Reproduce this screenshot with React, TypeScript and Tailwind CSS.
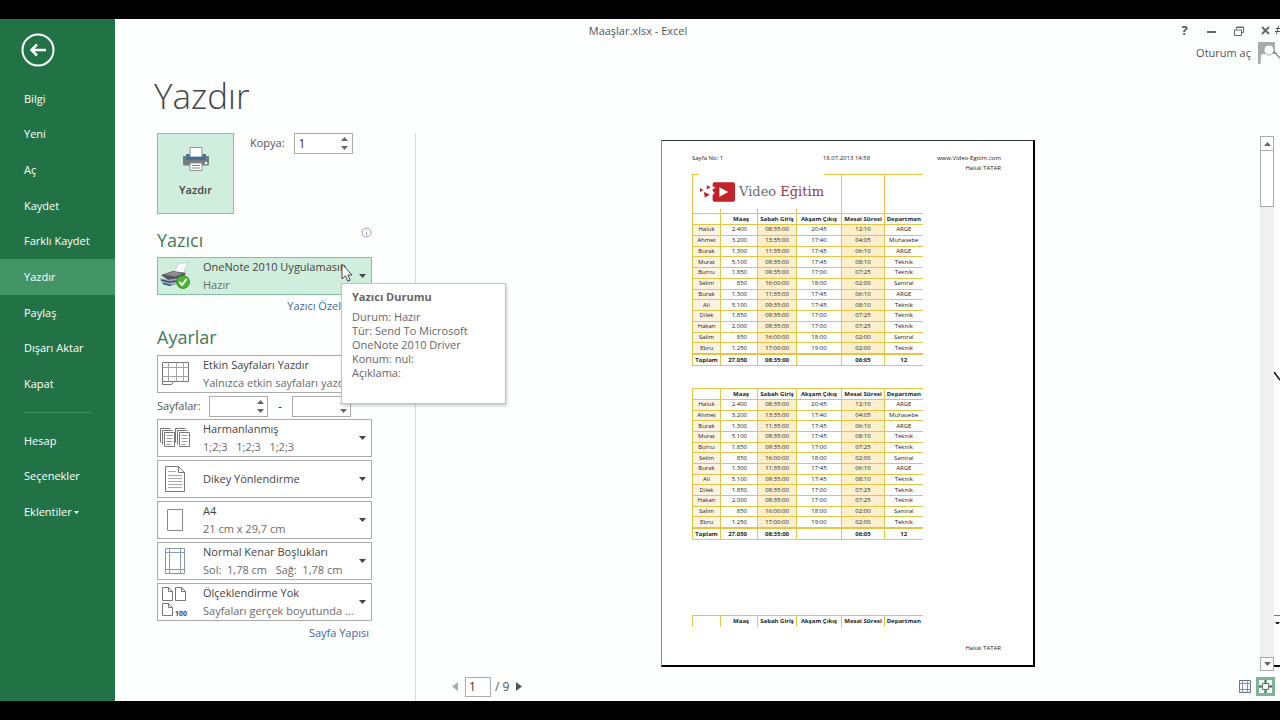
import { useState } from "react";
import type { ReactNode } from "react";

const mainMenu = ["Bilgi", "Yeni", "Aç", "Kaydet", "Farklı Kaydet", "Yazdır", "Paylaş", "Dışarı Aktar", "Kapat"];

const headings = ["", "Maaş", "Sabah Giriş", "Akşam Çıkış", "Mesai Süresi", "Departman"];

const employees = [
  ["Haluk", "2.400", "08:35:00", "20:45", "12:10", "ARGE"],
  ["Ahmet", "3.200", "13:35:00", "17:40", "04:05", "Muhasebe"],
  ["Burak", "1.300", "11:35:00", "17:45", "06:10", "ARGE"],
  ["Murat", "5.100", "09:35:00", "17:45", "08:10", "Teknik"],
  ["Burcu", "1.850", "09:35:00", "17:00", "07:25", "Teknik"],
  ["Selim", "850", "16:00:00", "18:00", "02:00", "Santral"],
  ["Burak", "1.300", "11:35:00", "17:45", "06:10", "ARGE"],
  ["Ali", "5.100", "09:35:00", "17:45", "08:10", "Teknik"],
  ["Dilek", "1.850", "09:35:00", "17:00", "07:25", "Teknik"],
  ["Hakan", "2.000", "09:35:00", "17:00", "07:25", "Teknik"],
  ["Salim", "850", "16:00:00", "18:00", "02:00", "Santral"],
  ["Ebru", "1.250", "17:00:00", "19:00", "02:00", "Teknik"],
];

const totals = ["Toplam", "27.050", "08:35:00", "", "06:05", "12"];

/* ---------- Icons ---------- */

const Caret = ({ className = "" }: { className?: string }) => (
  <svg className={className} width="7" height="4" viewBox="0 0 7 4" fill="currentColor">
    <path d="M0 0h7L3.500 4z" />
  </svg>
);

const CaretUp = ({ className = "" }: { className?: string }) => (
  <svg className={className} width="7" height="4" viewBox="0 0 7 4" fill="currentColor">
    <path d="M0 4h7L3.500 0z" />
  </svg>
);

const PrintIcon = () => (
  <svg width="28" height="26" viewBox="0 0 28 26">
    <path d="M1 10h26v8a1.500 1.500 0 0 1-1.500 1.500h-23A1.500 1.500 0 0 1 1 18z" fill="#737d80" />
    <path d="M4 8h20v6H4z" fill="#4a7399" />
    <path d="M8 1.500h12V11H8z" fill="#fff" stroke="#8a9396" />
    <path d="M6 11h16v2H6z" fill="#3f6c96" />
    <path d="M8 17h12v7.500H8z" fill="#fff" stroke="#8a9396" />
    <path d="M10 19.500h8M10 22h8" stroke="#7d868a" />
    <circle cx="24" cy="17" r="1.300" fill="#fff" />
  </svg>
);

const DeviceIcon = () => (
  <svg width="32" height="30" viewBox="0 0 32 30">
    <path d="M15 12l4-9 10-2-4 11z" fill="#f8f8fa" stroke="#c3c6cc" strokeWidth="0.800" />
    <path d="M2 14l12-4 13 2-4 6-14 1z" fill="#55555d" />
    <path d="M5 13.500l10-3 9 2-8 3z" fill="#8d8c94" />
    <path d="M1 17l8 2 12-2v5l-9 3-9-3z" fill="#a3abbb" />
    <path d="M2 19l8 2 8-1M4 22.500l8 2" stroke="#35527e" strokeWidth="1.300" fill="none" />
    <circle cx="24" cy="21" r="6.500" fill="#4ab534" stroke="#2c8c1c" strokeWidth="0.800" />
    <path d="M20.500 21l2.700 3 4.300-6" stroke="#fff" strokeWidth="2" fill="none" />
  </svg>
);

const SheetsIcon = () => (
  <svg width="28" height="26" viewBox="0 0 28 26" fill="none" stroke="#777">
    <path d="M1.500 1.500h26v19h-15l-2 3h-9zM1.500 20.500h11" />
    <path d="M1.500 6.500h26M1.500 15.500h26M7.500 1.500v19M15.500 1.500v19M22.500 1.500v19" stroke="#a5a5a5" />
  </svg>
);

const CollatedIcon = () => (
  <svg width="32" height="22" viewBox="0 0 32 22" fill="#fff" stroke="#777">
    {[0, 15].map((x) => (
      <g key={x}>
        <path d={`M${x + 1.5} 15.500v-14h10M${x + 3.5} 17.500v-14h10`} fill="none" />
        <path d={`M${x + 5.5} 5.500h10v14h-10z`} />
        <path d={`M${x + 7.5} 8.500h6M${x + 7.5} 11.500h6M${x + 7.5} 14.500h6M${x + 7.5} 17.500h4`} stroke="#999" />
      </g>
    ))}
  </svg>
);

const PortraitIcon = () => (
  <svg width="22" height="28" viewBox="0 0 22 28" fill="none" stroke="#777">
    <path d="M1.500 1.500h13l6 6v19h-19zM14.500 1.500v6h6" />
    <path d="M4 6.500h8M4 10.500h14M4 13.500h14M4 16.500h14M4 19.500h14M4 22.500h14" stroke="#a8a8a8" />
  </svg>
);

const PaperIcon = () => (
  <svg width="18" height="24" viewBox="0 0 18 24" fill="none" stroke="#888">
    <path d="M1.500 1.500h15v21h-15z" />
  </svg>
);

const MarginsIcon = () => (
  <svg width="22" height="28" viewBox="0 0 22 28" fill="none">
    <path d="M1.500 1.500h19v25h-19z" stroke="#8b949c" />
    <path d="M5.500 1v26M16.500 1v26M1 5.500h20M1 22.500h20" stroke="#7d9dba" />
  </svg>
);

const ScalingIcon = () => (
  <svg width="28" height="32" viewBox="0 0 28 32" fill="none" stroke="#777">
    <path d="M1.500 1.500h6l4 4v9h-10zM7.500 1.500v4h4" />
    <path d="M14.500 1.500h6l4 4v9h-10zM20.500 1.500v4h4" />
    <path d="M1.500 17.500h6l4 4v8h-10zM7.500 17.500v4h4" />
    <text x="14" y="30" fontSize="7" fontWeight="700" fill="#444" stroke="none">100</text>
  </svg>
);

const InfoIcon = () => (
  <svg width="11" height="11" viewBox="0 0 11 11" fill="none" stroke="#a29cc0">
    <circle cx="5.500" cy="5.500" r="4.500" />
    <path d="M5.500 5v3.500M5.500 2.500v1.200" />
  </svg>
);

const CursorIcon = () => (
  <svg className="absolute left-[184px] top-[6px] z-20" width="13" height="20" viewBox="0 0 13 20">
    <path d="M1 1v15l3.500-3.200 2.300 5.400 2.400-1-2.300-5.200H11z" fill="#fff" stroke="#444" />
  </svg>
);

const LogoMark = () => (
  <svg width="38" height="22" viewBox="0 0 38 22">
    <path d="M1 7l3.500 2L1 11zM8 4l4 2-4 2.500zM5 11l6 2.500L6 17z" fill="#b8242b" />
    <path d="M16 1h19a2 2 0 0 1 2 2v16a2 2 0 0 1-2 2H16a2 2 0 0 1-2-2v-5l2-2-2-2V8l3-1-3-2V3a2 2 0 0 1 2-2z" fill="#c4222b" />
    <path d="M21 6l9 5-9 5z" fill="#fff" />
  </svg>
);

/* ---------- Print settings ---------- */

const Spinner = ({ id, label, initial = "" }: { id: string; label: string; initial?: string }) => {
  const [value, setValue] = useState(initial);
  const step = (by: number) => setValue(String(Math.max(1, (Number(value) || 0) + by)));

  return (
    <div className="flex h-[21px] w-[59px] border border-[#ababab] bg-white">
      <input
        id={id}
        aria-label={label}
        value={value}
        onChange={(e) => setValue(e.target.value)}
        className="w-0 flex-1 pl-1 text-xs text-[#333] outline-none"
      />
      <div className="flex w-[14px] flex-col items-center justify-between py-[3px] text-[#666]">
        <button aria-label={`${label} artır`} onClick={() => step(1)}>
          <CaretUp className="block" />
        </button>
        <button aria-label={`${label} azalt`} onClick={() => step(-1)}>
          <Caret className="block" />
        </button>
      </div>
    </div>
  );
};

type OptionProps = { icon: ReactNode; title: string; detail?: string; active?: boolean };

const Option = ({ icon, title, detail, active }: OptionProps) => (
  <button
    aria-haspopup="listbox"
    className={`flex h-[38px] w-full items-center border pr-[5px] text-left ${
      active ? "border-[#86bfa0] bg-[#d0eedd]" : "border-[#ababab] bg-white"
    }`}
  >
    <span className="flex w-[34px] shrink-0 justify-center">{icon}</span>
    <span className="ml-[11px] min-w-0 flex-1 whitespace-pre leading-[18px]">
      <span className="block overflow-hidden text-[#444]">{title}</span>
      {detail && <span className="block overflow-hidden text-[#6a6a6a]">{detail}</span>}
    </span>
    <Caret className="shrink-0 text-[#444]" />
  </button>
);

const PrinterStatus = () => (
  <div
    role="tooltip"
    className="absolute left-[184px] top-[26px] z-10 w-[165px] border border-[#c3c3c3] bg-white px-[10px] pb-[23px] pt-[6px] leading-[14px] text-[#666] shadow-[1px_2px_3px_rgba(0,0,0,0.2)]"
  >
    <p className="mb-[6px] font-bold text-[#666]">Yazıcı Durumu</p>
    <p>Durum: Hazır</p>
    <p>Tür: Send To Microsoft</p>
    <p>OneNote 2010 Driver</p>
    <p>Konum: nul:</p>
    <p>Açıklama:</p>
  </div>
);

const Settings = () => (
  <section className="w-[301px] shrink-0 border-r border-[#dcdcdc] pl-[42px] pr-[43px]">
    <div className="flex">
      <button className="flex h-[81px] w-[77px] flex-col items-center border border-[#86bfa0] bg-[#d0eedd] pt-3 font-semibold text-[#444]">
        <PrintIcon />
        <span className="mt-[10px]">Yazdır</span>
      </button>
      <div className="ml-4 flex h-[21px] items-center gap-[9px]">
        <label htmlFor="copies" className="text-[#555]">Kopya:</label>
        <Spinner id="copies" label="Kopya" initial="1" />
      </div>
    </div>

    <div className="flex h-[43px] items-start justify-between">
      <h2 className="pt-3 text-lg text-[#3f7a5a]">Yazıcı</h2>
      <button aria-label="Yazıcı bilgisi" className="mt-[13px]"><InfoIcon /></button>
    </div>
    <div className="relative">
      <Option active icon={<DeviceIcon />} title="OneNote 2010 Uygulamasın" detail="Hazır" />
      <PrinterStatus />
      <CursorIcon />
    </div>
    <div className="flex h-[23px] w-[184px] items-center justify-end overflow-hidden whitespace-nowrap">
      <a href="#printer" aria-label="Yazıcı Özellikleri" className="text-[#44699a]">Yazıcı Özel</a>
    </div>

    <h2 className="flex h-[37px] items-center text-lg text-[#3f7a5a]">Ayarlar</h2>
    <Option icon={<SheetsIcon />} title="Etkin Sayfaları Yazdır" detail="Yalnızca etkin sayfaları yazdır" />
    <div className="flex h-[26px] items-center">
      <label htmlFor="from" className="w-[52px] text-[#555]">Sayfalar:</label>
      <Spinner id="from" label="İlk sayfa" />
      <span className="w-6 text-center">-</span>
      <Spinner id="to" label="Son sayfa" />
    </div>
    <div className="flex flex-col gap-[3px]">
      <Option icon={<CollatedIcon />} title="Harmanlanmış" detail="1;2;3   1;2;3   1;2;3" />
      <Option icon={<PortraitIcon />} title="Dikey Yönlendirme" />
      <Option icon={<PaperIcon />} title="A4" detail="21 cm x 29,7 cm" />
      <Option icon={<MarginsIcon />} title="Normal Kenar Boşlukları" detail="Sol:  1,78 cm   Sağ:  1,78 cm" />
      <Option icon={<ScalingIcon />} title="Ölçeklendirme Yok" detail="Sayfaları gerçek boyutunda ..." />
    </div>
    <div className="flex h-6 items-center justify-end pr-[3px]">
      <a href="#page-setup" className="text-[#44699a]">Sayfa Yapısı</a>
    </div>
  </section>
);

/* ---------- Preview ---------- */

const align = (i: number) => (i === 1 ? "pr-[10px] text-right" : "text-center");
const edge = (i: number) => (i === 5 ? "" : "border-r");
const shade = (i: number) => (i === 0 ? "bg-[#fdf3e3]" : i === 2 || i === 4 ? "bg-[#fdefcb]" : "");

const Columns = () => (
  <colgroup>
    <col className="w-[28px]" />
    <col className="w-[37px]" />
    <col className="w-[39px]" />
    <col className="w-[45px]" />
    <col className="w-[43px]" />
    <col className="w-[38px]" />
  </colgroup>
);

const HeadingRow = () => (
  <tr className="h-[11px] border-t border-[#e6c445]">
    {headings.map((text, i) => (
      <th key={i} className={`border-[#e6c445] p-0 font-bold ${edge(i)} ${i === 1 ? "pr-2 text-right" : ""}`}>
        {text}
      </th>
    ))}
  </tr>
);

const SalaryTable = ({ logo, body = true, className }: { logo?: boolean; body?: boolean; className: string }) => (
  <table className={`w-[230px] table-fixed border-collapse whitespace-nowrap border-l border-[#e6c445] leading-[9px] ${className}`}>
    <Columns />
    <thead>
      {logo && (
        <tr className="h-[39px] border-t border-[#e6c445]">
          {headings.map((_, i) => (
            <td key={i} className={`border-[#e6c445] p-0 ${edge(i)}`} />
          ))}
        </tr>
      )}
      <HeadingRow />
    </thead>
    {body && (
      <tbody>
        {employees.map((row, r) => (
          <tr key={r} className="border-t border-[#e6c445]">
            {row.map((text, i) => (
              <td key={i} className={`border-[#e6c445] p-0 ${edge(i)} ${align(i)} ${shade(i)}`}>{text}</td>
            ))}
          </tr>
        ))}
        <tr className="border-b border-t-2 border-[#e6c445] font-bold">
          {totals.map((text, i) => (
            <td key={i} className={`border-[#e6c445] p-0 ${edge(i)} ${align(i)}`}>{text}</td>
          ))}
        </tr>
      </tbody>
    )}
  </table>
);

const Sheet = () => (
  <article className="h-[527px] w-[374px] border-b-2 border-l border-r-2 border-t border-black border-l-[#888] border-t-[#333] bg-white pl-[30px] pr-8 pt-3 text-[6px] leading-[10px] text-[#222]">
    <header className="grid h-[21px] grid-cols-3">
      <span>Sayfa No: 1</span>
      <span className="text-center">18.07.2013 14:58</span>
      <span className="text-right">www.Video-Egitim.com<br />Haluk TATAR</span>
    </header>
    <div className="relative">
      <SalaryTable logo className="h-[192px]" />
      {/* the logo picture floats over the empty first row */}
      <div className="absolute left-[7px] top-0 flex h-[35px] w-[125px] items-center gap-[3px] whitespace-nowrap bg-white font-['DejaVu_Serif',serif] text-[13px] text-[#6a6a6a]">
        <LogoMark />
        <span>Video <span className="text-[#963a4a]">Eğitim</span></span>
      </div>
    </div>
    <SalaryTable className="mt-[22px] h-[152px]" />
    <SalaryTable body={false} className="mt-[75px]" />
    <footer className="mt-4 text-right">Haluk TATAR</footer>
  </article>
);

const ScrollBar = () => (
  <div className="flex w-[14px] flex-col bg-[#f0f0f0] text-[#666]">
    <button aria-label="Yukarı kaydır" className="flex h-[15px] items-center justify-center border border-[#ababab] bg-white">
      <CaretUp />
    </button>
    <div className="h-14 border border-t-0 border-[#ababab] bg-white" />
    <button aria-label="Aşağı kaydır" className="mt-auto flex h-[14px] items-center justify-center border border-[#ababab] bg-white">
      <Caret />
    </button>
  </div>
);

const WindowEdge = () => (
  <svg className="w-[6px] shrink-0" width="6" height="535" viewBox="0 0 6 535" fill="none">
    <path d="M0 236l6 8" stroke="#111" strokeWidth="1.500" />
    <path d="M0 479.500h6M1 486.500h5" stroke="#77779a" />
    <path d="M2 487h3" stroke="#222" strokeWidth="2" />
    <path d="M0 530h6" stroke="#111" strokeWidth="2" />
  </svg>
);

const Preview = () => {
  const [page, setPage] = useState(1);

  return (
    <section className="flex min-w-0 flex-1 flex-col pt-[3px]">
      <div className="flex flex-1">
        <div className="flex flex-1 items-center justify-center pl-5">
          <Sheet />
        </div>
        <ScrollBar />
        <WindowEdge />
      </div>
      <div className="flex h-[30px] items-center pl-9 pr-[5px] pt-px text-xs text-[#555]">
        <button aria-label="Önceki sayfa" onClick={() => setPage(Math.max(1, page - 1))}>
          <svg width="6" height="9" viewBox="0 0 6 9"><path d="M6 0v9L0 4.500z" fill="#aaa" /></svg>
        </button>
        <input
          aria-label="Sayfa"
          value={page}
          onChange={(e) => setPage(Number(e.target.value) || 1)}
          className="ml-[7px] h-5 w-[26px] border border-[#ababab] bg-white pl-[3px] text-[#333] outline-none"
        />
        <span className="ml-1 mr-[7px]">/ 9</span>
        <button aria-label="Sonraki sayfa" onClick={() => setPage(Math.min(9, page + 1))}>
          <svg width="6" height="9" viewBox="0 0 6 9"><path d="M0 0v9l6-4.500z" fill="#555" /></svg>
        </button>
        <button aria-label="Kenar boşluklarını göster" className="ml-auto mr-1">
          <svg width="13" height="15" viewBox="0 0 13 15" fill="none" stroke="#5f6f8c">
            <path d="M.5 1.500h11v12H.5z" />
            <path d="M3.500 1v13M8.500 1v13M0 4.500h12M0 10.500h12" stroke="#8591a8" />
          </svg>
        </button>
        <button aria-label="Sayfaya yakınlaştır">
          <svg width="19" height="19" viewBox="0 0 19 19" fill="none">
            <path d="M0 0h19v19H0z" fill="#7fb498" />
            <path d="M3 3h5v3H6v2H3zM11 3h5v5h-3V6h-2zM3 11h3v2h2v3H3zM13 11h3v5h-5v-3h2z" fill="#f6fbf8" />
            <path d="M6.500 6.500h6v6h-6z" fill="#fff" stroke="#5d7466" />
            <path d="M9.500 3v2.500M9.500 13.500V16M3 9.500h2.500M13.500 9.500H16" stroke="#3f6b54" />
          </svg>
        </button>
      </div>
    </section>
  );
};

/* ---------- Window ---------- */

const itemClass = "flex items-center pl-6 text-left text-white";

const Sidebar = () => {
  const [selected, setSelected] = useState("Yazdır");

  return (
    <nav className="w-[115px] shrink-0 whitespace-nowrap bg-[#217346] font-medium">
      <div className="h-[62px] pl-[21px] pt-[14px]">
        <button aria-label="Geri">
          <svg width="34" height="34" viewBox="0 0 34 34" fill="none" stroke="#fff" strokeWidth="2">
            <circle cx="17" cy="17" r="15.500" />
            <path d="M25 17H10.500M16 11.500L10.500 17l5.500 5.500" strokeWidth="2.500" />
          </svg>
        </button>
      </div>
      <div className="grid h-[321px] auto-rows-fr">
        {mainMenu.map((name) => (
          <button
            key={name}
            onClick={() => setSelected(name)}
            className={`${itemClass} ${selected === name ? "bg-[#439467]" : ""}`}
          >
            {name}
          </button>
        ))}
      </div>
      <hr className="mx-6 my-[10px] border-[#439467]" />
      <div className="grid h-[107px] auto-rows-fr">
        <button className={itemClass}>Hesap</button>
        <button className={itemClass}>Seçenekler</button>
        <button className={itemClass}>
          Eklentiler
          <svg className="ml-[2px]" width="5" height="3" viewBox="0 0 5 3"><path d="M0 0h5L2.500 3z" fill="#fff" /></svg>
        </button>
      </div>
    </nav>
  );
};

const controlClass = "flex w-[27px] items-center justify-center";

const TitleBar = () => (
  <header className="relative overflow-hidden text-[#555]">
    <div className="flex h-[23px]">
      <h1 className="flex-1 text-center leading-[23px]">Maaşlar.xlsx - Excel</h1>
      <div className="flex w-[119px] shrink-0 pl-[10px]">
        <button aria-label="Yardım" className={`${controlClass} text-[13px] font-bold`}>?</button>
        <button aria-label="Simge durumuna küçült" className={controlClass}>
          <svg width="9" height="9" viewBox="0 0 9 9"><path d="M0 6h9" stroke="#666" strokeWidth="2" /></svg>
        </button>
        <button aria-label="Önceki boyut" className={controlClass}>
          <svg width="10" height="10" viewBox="0 0 10 10" fill="none" stroke="#666">
            <path d="M2.500 3V1h7v5.500H8M2 1.500h8M.5 4v5.500h7V4M0 4h8" />
          </svg>
        </button>
        <button aria-label="Kapat" className={controlClass}>
          <svg width="9" height="9" viewBox="0 0 9 9"><path d="M1 1l7 7M8 1L1 8" stroke="#666" strokeWidth="1.800" /></svg>
        </button>
      </div>
    </div>
    <div className="flex h-[22px] items-center justify-end">
      <a href="#account">Oturum aç</a>
      <svg className="ml-[7px]" width="22" height="22" viewBox="0 0 22 22">
        <path d="M0 0h17v12H0z" fill="#ababab" />
        <path d="M0 10h5l-2 4-.5 8H0z" fill="#ababab" />
        <path d="M3 13q8 4 14-1v10H3z" fill="#fdfefe" />
        <circle cx="11" cy="8" r="5" fill="#fff" stroke="#aaa" />
        <path d="M15 10l4 2M18 12l4 4" stroke="#888" strokeWidth="1.500" />
      </svg>
    </div>
    <svg className="absolute right-0 top-[6px]" width="5" height="10" viewBox="0 0 5 10" fill="none" stroke="#555">
      <path d="M3.500 1L1.500 9M1 3.500h4M0 6.500h5" />
    </svg>
  </header>
);

const App = () => (
  <div className="flex min-h-screen bg-black py-[19px] font-['Open_Sans','Noto_Sans',sans-serif] text-[11px]">
    <Sidebar />
    <main className="flex min-w-0 flex-1 flex-col bg-[#fdfefe]">
      <TitleBar />
      <h2 className="flex h-[69px] items-center pb-1 pl-[39px] text-[35px] font-light text-[#444]">Yazdır</h2>
      <div className="flex flex-1">
        <Settings />
        <Preview />
      </div>
    </main>
  </div>
);

export default App;
